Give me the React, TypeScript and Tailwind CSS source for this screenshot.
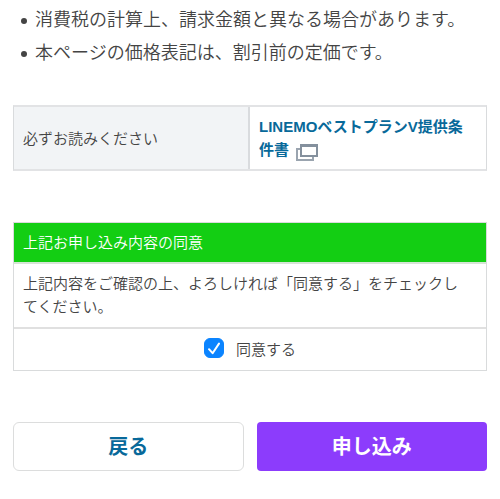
const notes = [
  "消費税の計算上、請求金額と異なる場合があります。",
  "本ページの価格表記は、割引前の定価です。",
];

function NewWindowIcon() {
  return (
    <svg
      className="ml-[6px] inline-block h-5 w-6 align-middle"
      viewBox="0 0 24 20"
      fill="none"
      aria-hidden="true"
    >
      <path d="M7 8H2V19H18V15" stroke="#9aa4af" strokeWidth="2" />
      <rect x="6" y="4" width="16" height="11" fill="#fff" stroke="#84909d" strokeWidth="2" />
      <path d="M5 4.5H23" stroke="#84909d" strokeWidth="3" />
    </svg>
  );
}

function DocumentTable() {
  return (
    <table className="mt-[35px] w-full table-fixed border-separate border-spacing-0 border-x border-y-2 border-x-[#d9dbdd] border-y-[#e2e3e5] text-left">
      <tbody>
        <tr>
          <th
            scope="row"
            className="h-[62px] w-1/2 border-r-2 border-[#d9dbde] bg-[#f2f4f6] px-[9px] align-middle font-[350]"
          >
            必ずお読みください
          </th>
          <td className="pt-1 pr-4 pb-1 pl-[9px] align-middle font-bold text-[#08699a]">
            <a href="#terms">
              LINEMOベストプランV提供条件書
              <NewWindowIcon />
            </a>
          </td>
        </tr>
      </tbody>
    </table>
  );
}

function ConsentTable() {
  return (
    <table className="mt-[51px] w-full border-separate border-spacing-0 border border-[#d9dbdc] text-left">
      <thead>
        <tr>
          <th
            scope="col"
            className="h-[41px] border-b-2 border-[#d6e4d6] bg-[#13ce13] px-[9px] align-middle font-[350] text-white"
          >
            上記お申し込み内容の同意
          </th>
        </tr>
      </thead>
      <tbody>
        <tr>
          <td className="h-[65px] border-b-2 border-[#e0e0e0] pt-2 pr-5 pl-[9px] align-top">
            上記内容をご確認の上、よろしければ「同意する」をチェックしてください。
          </td>
        </tr>
        <tr>
          <td className="h-[41px] align-middle">
            <label className="flex items-center justify-center gap-3">
              <span className="relative mb-1 size-5">
                <input
                  type="checkbox"
                  defaultChecked
                  className="peer block size-5 appearance-none rounded-md border border-gray-400 checked:border-[#0b84ff] checked:bg-[#0b84ff]"
                />
                <svg
                  className="pointer-events-none absolute inset-0 hidden size-5 peer-checked:block"
                  viewBox="0 0 20 20"
                  fill="none"
                  aria-hidden="true"
                >
                  <path
                    d="M5 11.2L8.6 15.2L15 5.6"
                    stroke="#fff"
                    strokeWidth="2"
                    strokeLinecap="round"
                    strokeLinejoin="round"
                  />
                </svg>
              </span>
              同意する
            </label>
          </td>
        </tr>
      </tbody>
    </table>
  );
}

export default function App() {
  return (
    <main className="bg-white px-[13px] pt-1 pb-7 font-['Liberation_Sans','Noto_Sans_CJK_JP',sans-serif] text-[15px] leading-[23px] font-[350] text-[#444]">
      <ul className="text-lg leading-[33px]">
        {notes.map((note) => (
          <li key={note} className="flex items-center whitespace-nowrap">
            <span className="mr-2 ml-2 size-[6px] shrink-0 rounded-full bg-[#444]" />
            {note}
          </li>
        ))}
      </ul>

      <DocumentTable />
      <ConsentTable />

      <div className="mt-[51px] grid grid-cols-2 gap-[13px] text-xl font-bold">
        <button
          type="button"
          className="h-[49px] rounded-md border border-[#dcdddd] bg-white text-[#08699a]"
        >
          戻る
        </button>
        <button type="button" className="h-[49px] rounded bg-[#8c3cfc] text-white">
          申し込み
        </button>
      </div>
    </main>
  );
}
